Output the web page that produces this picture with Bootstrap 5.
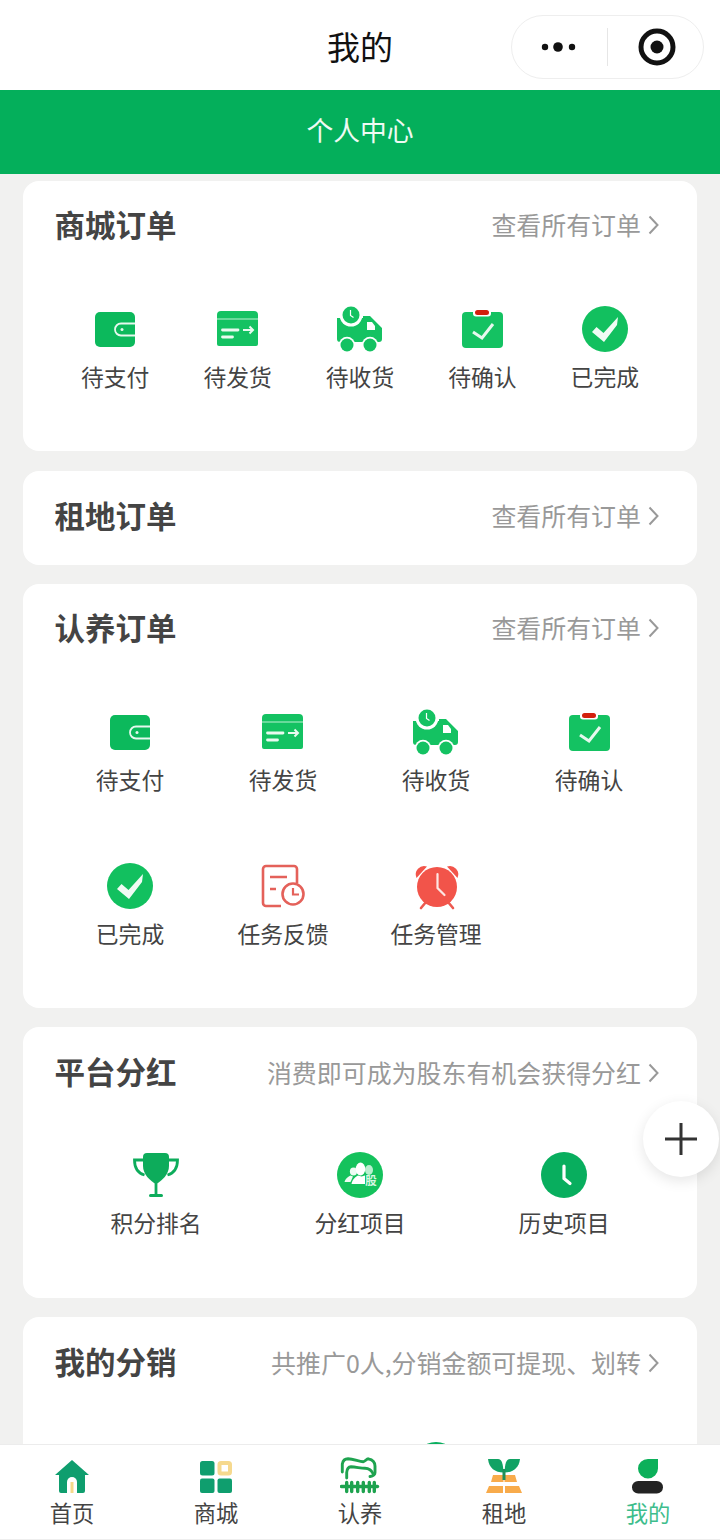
<!doctype html>
<html lang="zh">
<head>
<meta charset="utf-8">
<title>我的</title>
<link href="https://cdn.jsdelivr.net/npm/bootstrap@5.3.0/dist/css/bootstrap.min.css" rel="stylesheet">
<style>
  html, body { height: 100%; margin: 0; }
  body { font-family: "Noto Sans CJK SC", "Liberation Sans", sans-serif; background: #f1f1f0; overflow: hidden; }
  .app-shell { height: 1540px; width: 720px; position: relative; }
  .title-bar { height: 90px; background: #fff; position: relative; }
  .title-text { font-size: 33px; line-height: 92px; color: #111; }
  .capsule { position: absolute; left: 511px; top: 15px; width: 193px; height: 64px; border: 1px solid #eee; border-radius: 32px; }
  .capsule-rule { width: 1px; height: 38px; background: #e6e6e6; }
  .capsule-more { width: 95px; }
  .capsule-target { padding-left: 2px; }
  .hero-bar { height: 84px; background: #04af5b; color: #eefaf3; font-size: 26.8px; line-height: 80px; }
  .scroll-area { flex: 1 1 0; min-height: 0; overflow: hidden; padding: 7px 23px 0; }
  .panel { background: #fff; border-radius: 16px; margin-bottom: 19.5px; }
  .panel-tight { margin-bottom: 19px; }
  .panel-head { height: 90px; padding: 0 38px 2px 31.5px; }
  .panel-head-short { height: 94px; padding-bottom: 3px; }
  .panel-head-low { padding-top: 2px; padding-bottom: 0; }
  .panel-title { font-size: 30.5px; font-weight: 700; color: #444; }
  .panel-head-low .panel-title { margin-bottom: 2px; }
  .panel-link { font-size: 24.95px; color: #999; gap: 7px; }
  .panel-body { padding: 34px 31px 58px; row-gap: 65.5px; display: grid; }
  .cols-5 { grid-template-columns: repeat(5, 1fr); }
  .cols-4 { grid-template-columns: repeat(4, 1fr); padding-left: 30.5px; padding-right: 31.5px; }
  .cols-3 { grid-template-columns: repeat(3, 1fr); padding-bottom: 59px; }
  .tile { height: 88px; }
  .tile svg { display: block; }
  .tile-label { font-size: 22.8px; line-height: 32px; margin-top: 8px; color: #444; white-space: nowrap; }
  .fab { position: absolute; left: 643px; top: 1101px; width: 76px; height: 76px; border-radius: 50%; background: #fff; box-shadow: 0 4px 14px rgba(0,0,0,.1); }
  .tab-bar { height: 96px; background: #fff; border-top: 1px solid #ececec; border-bottom: 1px solid #eee; position: relative; }
  .tab-item { width: 144px; padding-top: 12px; }
  .tab-label { font-size: 22.3px; line-height: 30px; color: #444; }
  .tab-label-on { color: #3dbd8c; }
</style>
</head>
<body>
<svg width="0" height="0" class="position-absolute">
  <defs>
    <!-- wallet -->
    <symbol id="ic-wallet" viewBox="0 0 48 48">
      <rect x="4" y="7" width="40" height="35" rx="5" fill="#0cb95c"/>
      <path d="M44 18.500H30a6 6 0 0 0 0 12H44" fill="#0cb95c" stroke="#e6f8ee" stroke-width="1.800"/>
      <circle cx="31" cy="24.500" r="1.500" fill="#e6f8ee"/>
    </symbol>
    <!-- parcel with an arrow -->
    <symbol id="ic-parcel" viewBox="0 0 48 48">
      <path d="M7 6h33a4 4 0 0 1 4 4v29a2 2 0 0 1-2 2H5a2 2 0 0 1-2-2V10a4 4 0 0 1 4-4z" fill="#14c262"/>
      <path d="M3 14h41" stroke="#bdf0d3" stroke-width="1"/>
      <path d="M8.500 25h15.500M8.500 32h10" stroke="#e9faf0" stroke-width="2.800" stroke-linecap="round"/>
      <path d="M29 25h10M35.500 21.500 39 25l-3.500 3.500" fill="none" stroke="#e9faf0" stroke-width="2"/>
    </symbol>
    <!-- delivery truck with clock -->
    <symbol id="ic-truck" viewBox="0 0 48 48">
      <path d="M1 13H27V11h7l12 12v11a3 3 0 0 1-3 3H4a3 3 0 0 1-3-3z" fill="#14c262"/>
      <path d="M31 17h5l3 4v4h-8z" fill="#fff"/>
      <circle cx="15" cy="10" r="11.500" fill="#fff"/>
      <circle cx="15" cy="10" r="8.500" fill="#14c262"/>
      <path d="M14.500 5v5.500l3 2" fill="none" stroke="#fff" stroke-width="1.200"/>
      <circle cx="11" cy="40" r="8.200" fill="#fff"/>
      <circle cx="34" cy="40" r="8.200" fill="#fff"/>
      <circle cx="11" cy="40" r="6.500" fill="#14c262"/>
      <circle cx="34" cy="40" r="6.500" fill="#14c262"/>
    </symbol>
    <!-- clipboard with a tick -->
    <symbol id="ic-clipboard" viewBox="0 0 48 48">
      <rect x="4" y="7" width="41" height="36" rx="4" fill="#14c262"/>
      <rect x="15" y="3.500" width="18" height="8" rx="3" fill="#fff"/>
      <rect x="17" y="5" width="14" height="5" rx="2.500" fill="#d3200e"/>
      <path d="M15 27l9 6 11-14" fill="none" stroke="#e6f8ee" stroke-width="3"/>
    </symbol>
    <!-- finished tick -->
    <symbol id="ic-done" viewBox="0 0 48 48">
      <circle cx="24" cy="24" r="23" fill="#12c05f"/>
      <path d="M11 27l4.500-5 7 6L37 12l-1 8-13 17z" fill="#f0fbf4"/>
    </symbol>
    <!-- task report with clock -->
    <symbol id="ic-report" viewBox="0 0 48 48">
      <path d="M22 44H7a3 3 0 0 1-3-3V7a3 3 0 0 1 3-3h28a3 3 0 0 1 3 3v14" fill="none" stroke="#e4615a" stroke-width="2.600"/>
      <path d="M11 15h17M11 27h6" stroke="#e4615a" stroke-width="2.600"/>
      <circle cx="34" cy="32" r="10.500" fill="#fff" stroke="#e4615a" stroke-width="2.600"/>
      <path d="M34 26v6.500h6" fill="none" stroke="#e4615a" stroke-width="2.200"/>
    </symbol>
    <!-- alarm clock -->
    <symbol id="ic-alarm" viewBox="0 0 48 48">
      <path d="M4.500 16A8.500 8.500 0 0 1 15 4.500z" fill="#f2544a"/>
      <path d="M45.500 16A8.500 8.500 0 0 0 35 4.500z" fill="#f2544a"/>
      <path d="M14 40l-5 6M36 40l5 6" stroke="#ec5a50" stroke-width="2.600" stroke-linecap="round"/>
      <circle cx="25" cy="25" r="20" fill="#f2544a"/>
      <path d="M25.500 12v14l7 7" fill="none" stroke="#fde6e3" stroke-width="2.200" stroke-linecap="round"/>
    </symbol>
    <!-- trophy -->
    <symbol id="ic-trophy" viewBox="1 0 48 48">
      <path d="M13 9H3.500c0 8 3 13 10 15M37 9h9.500c0 8-3 13-10 15" fill="none" stroke="#0dac5b" stroke-width="2.800"/>
      <path d="M16 2h18a4 4 0 0 1 4 4v9c0 8-7 15-13 18C19 30 12 23 12 15V6a4 4 0 0 1 4-4z" fill="#0dac5b"/>
      <path d="M25 30v13" stroke="#0dac5b" stroke-width="2.800"/>
      <rect x="18" y="43" width="14" height="3" rx="1.500" fill="#0dac5b"/>
    </symbol>
    <!-- shareholders group -->
    <symbol id="ic-group" viewBox="0 0 48 48">
      <circle cx="24" cy="24" r="23" fill="#14c25c"/>
      <ellipse cx="17.500" cy="20.500" rx="3.600" ry="4" fill="#eefbf3"/>
      <path d="M8.500 31c.5-3 3-5 6-6.500l2.500 1-2.500 5.500z" fill="#eefbf3"/>
      <ellipse cx="33" cy="19" rx="4" ry="5" fill="#b9efcf"/>
      <ellipse cx="24.500" cy="18" rx="4.800" ry="6.500" fill="#fff"/>
      <path d="M15.500 33c1-5 4-7 6.500-8.500l3.500 1 3.500-1V33z" fill="#fff"/>
      <text x="35" y="34" font-size="11.500" font-weight="700" text-anchor="middle" fill="#d8f7e4" font-family="Noto Sans CJK SC, sans-serif">股</text>
    </symbol>
    <!-- history clock -->
    <symbol id="ic-history" viewBox="0 0 48 48">
      <circle cx="24" cy="24" r="23" fill="#08ae5e"/>
      <path d="M24 15v12.500l6 5" fill="none" stroke="#fff" stroke-width="3.200" stroke-linecap="round"/>
    </symbol>
  </defs>
</svg>

<div class="app-shell d-flex flex-column">
  <header class="title-bar text-center">
    <div class="title-text">我的</div>
    <div class="capsule d-flex align-items-center">
      <div class="capsule-more d-flex align-items-center justify-content-center">
        <svg width="42" height="14" viewBox="0 0 42 14"><circle cx="6" cy="7" r="3.200" fill="#111"/><circle cx="19" cy="7" r="4.800" fill="#111"/><circle cx="33" cy="7" r="3.200" fill="#111"/></svg>
      </div>
      <div class="capsule-rule"></div>
      <div class="capsule-target flex-fill d-flex align-items-center justify-content-center">
        <svg width="38" height="38" viewBox="0 0 38 38"><circle cx="19" cy="19" r="16" fill="none" stroke="#111" stroke-width="5"/><circle cx="19" cy="19" r="6.500" fill="#111"/></svg>
      </div>
    </div>
  </header>
  <div class="hero-bar text-center">个人中心</div>

  <main class="scroll-area">
    <section class="panel">
      <div class="panel-head d-flex align-items-center justify-content-between">
        <span class="panel-title">商城订单</span>
        <span class="panel-link d-flex align-items-center">查看所有订单<svg width="11" height="20" viewBox="0 0 11 20"><path d="M1.500 1.500 9.500 10l-8 8.500" fill="none" stroke="#999" stroke-width="2"/></svg></span>
      </div>
      <div class="panel-body cols-5">
        <div class="tile d-flex flex-column align-items-center"><svg width="48" height="48"><use href="#ic-wallet"/></svg><div class="tile-label">待支付</div></div>
        <div class="tile d-flex flex-column align-items-center"><svg width="48" height="48"><use href="#ic-parcel"/></svg><div class="tile-label">待发货</div></div>
        <div class="tile d-flex flex-column align-items-center"><svg width="48" height="48"><use href="#ic-truck"/></svg><div class="tile-label">待收货</div></div>
        <div class="tile d-flex flex-column align-items-center"><svg width="48" height="48"><use href="#ic-clipboard"/></svg><div class="tile-label">待确认</div></div>
        <div class="tile d-flex flex-column align-items-center"><svg width="48" height="48"><use href="#ic-done"/></svg><div class="tile-label">已完成</div></div>
      </div>
    </section>

    <section class="panel">
      <div class="panel-head panel-head-short d-flex align-items-center justify-content-between">
        <span class="panel-title">租地订单</span>
        <span class="panel-link d-flex align-items-center">查看所有订单<svg width="11" height="20" viewBox="0 0 11 20"><path d="M1.500 1.500 9.500 10l-8 8.500" fill="none" stroke="#999" stroke-width="2"/></svg></span>
      </div>
    </section>

    <section class="panel">
      <div class="panel-head d-flex align-items-center justify-content-between">
        <span class="panel-title">认养订单</span>
        <span class="panel-link d-flex align-items-center">查看所有订单<svg width="11" height="20" viewBox="0 0 11 20"><path d="M1.500 1.500 9.500 10l-8 8.500" fill="none" stroke="#999" stroke-width="2"/></svg></span>
      </div>
      <div class="panel-body cols-4">
        <div class="tile d-flex flex-column align-items-center"><svg width="48" height="48"><use href="#ic-wallet"/></svg><div class="tile-label">待支付</div></div>
        <div class="tile d-flex flex-column align-items-center"><svg width="48" height="48"><use href="#ic-parcel"/></svg><div class="tile-label">待发货</div></div>
        <div class="tile d-flex flex-column align-items-center"><svg width="48" height="48"><use href="#ic-truck"/></svg><div class="tile-label">待收货</div></div>
        <div class="tile d-flex flex-column align-items-center"><svg width="48" height="48"><use href="#ic-clipboard"/></svg><div class="tile-label">待确认</div></div>
        <div class="tile d-flex flex-column align-items-center"><svg width="48" height="48"><use href="#ic-done"/></svg><div class="tile-label">已完成</div></div>
        <div class="tile d-flex flex-column align-items-center"><svg width="48" height="48"><use href="#ic-report"/></svg><div class="tile-label">任务反馈</div></div>
        <div class="tile d-flex flex-column align-items-center"><svg width="48" height="48"><use href="#ic-alarm"/></svg><div class="tile-label">任务管理</div></div>
      </div>
    </section>

    <section class="panel panel-tight">
      <div class="panel-head panel-head-low d-flex align-items-center justify-content-between">
        <span class="panel-title">平台分红</span>
        <span class="panel-link d-flex align-items-center">消费即可成为股东有机会获得分红<svg width="11" height="20" viewBox="0 0 11 20"><path d="M1.500 1.500 9.500 10l-8 8.500" fill="none" stroke="#999" stroke-width="2"/></svg></span>
      </div>
      <div class="panel-body cols-3">
        <div class="tile d-flex flex-column align-items-center"><svg width="48" height="48"><use href="#ic-trophy"/></svg><div class="tile-label">积分排名</div></div>
        <div class="tile d-flex flex-column align-items-center"><svg width="48" height="48"><use href="#ic-group"/></svg><div class="tile-label">分红项目</div></div>
        <div class="tile d-flex flex-column align-items-center"><svg width="48" height="48"><use href="#ic-history"/></svg><div class="tile-label">历史项目</div></div>
      </div>
    </section>

    <section class="panel">
      <div class="panel-head panel-head-low d-flex align-items-center justify-content-between">
        <span class="panel-title">我的分销</span>
        <span class="panel-link d-flex align-items-center">共推广0人,分销金额可提现、划转<svg width="11" height="20" viewBox="0 0 11 20"><path d="M1.500 1.500 9.500 10l-8 8.500" fill="none" stroke="#999" stroke-width="2"/></svg></span>
      </div>
      <div class="panel-body cols-4">
        <div class="tile"></div>
        <div class="tile"></div>
        <div class="tile d-flex flex-column align-items-center"><svg width="48" height="48"><use href="#ic-history"/></svg></div>
      </div>
    </section>
  </main>

  <nav class="tab-bar d-flex">
    <div class="tab-item d-flex flex-column align-items-center">
      <svg width="40" height="40" viewBox="0 0 40 40">
        <path d="M20 3 37 18h-4v16a2 2 0 0 1-2 2H9a2 2 0 0 1-2-2V18H3z" fill="#0f9e6e"/>
        <path d="M15 36V25a5 5 0 0 1 10 0v11z" fill="#fff"/>
        <rect x="18.500" y="25" width="3" height="11" fill="#f5d98b"/>
      </svg>
      <div class="tab-label">首页</div>
    </div>
    <div class="tab-item d-flex flex-column align-items-center">
      <svg width="40" height="40" viewBox="0 0 40 40">
        <rect x="4" y="4" width="14.500" height="14.500" rx="2.500" fill="#0f9e6e"/>
        <rect x="23.500" y="6" width="10.500" height="10.500" rx="1.500" fill="none" stroke="#f6d98e" stroke-width="4"/>
        <rect x="4" y="21.500" width="14.500" height="14.500" rx="2" fill="#0f9e6e"/>
        <rect x="21.500" y="21.500" width="14.500" height="14.500" rx="2" fill="#0f9e6e"/>
      </svg>
      <div class="tab-label">商城</div>
    </div>
    <div class="tab-item d-flex flex-column align-items-center">
      <svg width="40" height="40" viewBox="0 0 40 40" fill="none" stroke="#1ea34f" stroke-linecap="round" stroke-linejoin="round">
        <path d="M2.300 15V7C3 3.500 5 1.800 8 1.800 14 2 19 4.700 23.300 4.700 25 4.700 26.500 1.800 28.300 1.800 32 2.500 35 5 35 9v6.500c0 2-2 3.500-5 4" stroke-width="2.900"/>
        <path d="M6.700 21v-5.500C7 12 8.500 10 11 9.800 16 10 21 11.300 25 11.300c3 0 6 .7 8.300 5.700" stroke-width="2.900"/>
        <path d="M1.500 29.500h36" stroke-width="3.400"/>
        <path d="M6.700 25.500v9M11.700 25.500v9M17.700 25.500v9M23.300 25.500v9M29.300 25.500v9M34.300 25.500v9" stroke-width="3.400"/>
      </svg>
      <div class="tab-label">认养</div>
    </div>
    <div class="tab-item d-flex flex-column align-items-center">
      <svg width="40" height="40" viewBox="0 0 40 40">
        <path d="M4 2h10c4 0 5 5 5.500 13.500C11 15.500 5 11 4 2z" fill="#11a264"/>
        <path d="M36 2H26c-4 0-5 5-5.500 13.500C29 15.500 35 11 36 2z" fill="#11a264"/>
        <path d="M9 18h10.500v7H7zM20.500 18H31l2 7H20.500z" fill="#f8ab4b"/>
        <path d="M5 29h14v7H2zM21 29h14l3 7H21z" fill="#f8ab4b"/>
        <rect x="18.500" y="12" width="3" height="11" fill="#1f8f5a"/>
      </svg>
      <div class="tab-label">租地</div>
    </div>
    <div class="tab-item d-flex flex-column align-items-center">
      <svg width="40" height="40" viewBox="0 0 40 40">
        <path d="M30 2v9.500a10 10 0 0 1-20 0A10 9.500 0 0 1 20 2z" fill="#0cb05a"/>
        <rect x="4" y="24" width="31" height="12.500" rx="6.200" fill="#232323"/>
      </svg>
      <div class="tab-label tab-label-on">我的</div>
    </div>
  </nav>

  <div class="fab d-flex align-items-center justify-content-center">
    <svg width="34" height="34" viewBox="0 0 34 34"><path d="M17 1v32M1 17h32" stroke="#333" stroke-width="3"/></svg>
  </div>
</div>
<script src="https://cdn.jsdelivr.net/npm/bootstrap@5.3.0/dist/js/bootstrap.bundle.min.js"></script>
</body>
</html>
